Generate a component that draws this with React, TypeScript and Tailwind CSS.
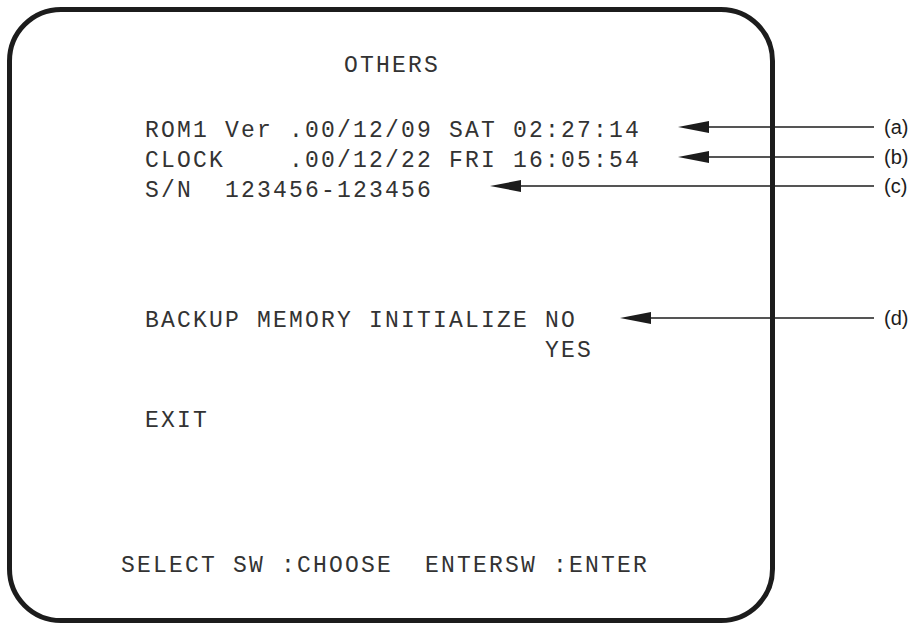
import React from 'react';

/* Setup screen "OTHERS" — monitor menu drawn inside a rounded frame,
 * with callout arrows (a)–(d) pointing at the lines from the right. */

const mono = "font-['Liberation_Mono','DejaVu_Sans_Mono',monospace]";

const callouts = [
  { id: 'a', y: 127, tip: 678 },
  { id: 'b', y: 157, tip: 678 },
  { id: 'c', y: 186, tip: 490 },
  { id: 'd', y: 318, tip: 620 },
];

function Line({ children, className = '' }: { children: React.ReactNode; className?: string }) {
  return <div className={`h-[30px] leading-[30px] whitespace-pre ${className}`}>{children}</div>;
}

export default function App() {
  return (
    <div className="relative w-[924px] h-[623px] overflow-hidden bg-white">
      <div
        className={`ml-[7px] mt-[7px] w-[768px] h-[616px] rounded-[54px] border-[5px] border-[#1c1c1c] flex flex-col text-[23px] tracking-[2.2px] text-[#333333] ${mono}`}
      >
        <Line className="mt-[39px] text-center pl-[2px]">OTHERS</Line>

        <div className="mt-[35px] pl-[133px]">
          <Line>ROM1 Ver .00/12/09 SAT 02:27:14</Line>
          <Line>CLOCK    .00/12/22 FRI 16:05:54</Line>
          <Line>S/N  123456-123456</Line>
        </div>

        <div className="mt-[100px] pl-[133px]">
          <Line className="h-[28px] leading-[28px]">BACKUP MEMORY INITIALIZE NO</Line>
          <Line className="h-[28px] leading-[28px]">{'                         YES'}</Line>
        </div>

        <div className="mt-[40px] pl-[133px]">
          <Line>EXIT</Line>
        </div>

        <div className="mt-auto mb-[37px] pl-[109px]">
          <Line>SELECT SW :CHOOSE  ENTERSW :ENTER</Line>
        </div>
      </div>

      <svg className="absolute inset-0" width={924} height={623} viewBox="0 0 924 623">
        {callouts.map((c) => (
          <g key={c.id}>
            <line x1={c.tip + 20} y1={c.y} x2={874} y2={c.y} stroke="#1c1c1c" strokeWidth={1.5} />
            <polygon points={`${c.tip},${c.y} ${c.tip + 31},${c.y - 6} ${c.tip + 31},${c.y + 6}`} fill="#1c1c1c" />
          </g>
        ))}
      </svg>

      {callouts.map((c) => (
        <span
          key={c.id}
          className="absolute left-[884px] h-[22px] leading-[22px] text-[20px] text-[#1c1c1c] font-['Liberation_Sans',Arial,sans-serif]"
          style={{ top: c.y - 11 }}
        >
          ({c.id})
        </span>
      ))}
    </div>
  );
}
